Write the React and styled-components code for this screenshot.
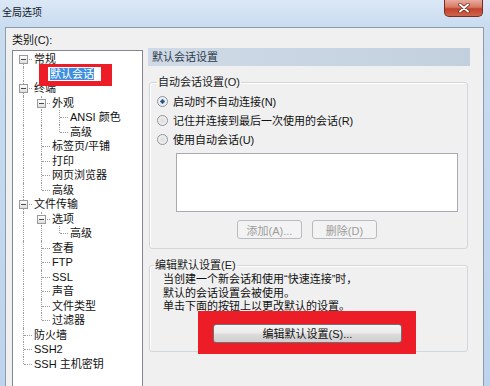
import React from "react";
import styled, { createGlobalStyle } from "styled-components";

const FONT = `"Liberation Sans", "Noto Sans CJK SC", sans-serif`;

const GlobalStyle = createGlobalStyle`
  html, body {
    margin: 0;
    padding: 0;
    overflow: hidden;
    background: #c6daef;
  }
  body {
    font-family: ${FONT};
    font-size: 11px;
    color: #111;
  }
`;

const Window = styled.div`
  width: 490px;
  height: 386px;
  display: flex;
  flex-direction: column;
  overflow: hidden;
  background: linear-gradient(180deg, #dbe8f6 0, #c9dcf0 26px, #bdd4ec 100%);
`;

const TitleBar = styled.div`
  height: 27px;
  flex-shrink: 0;
  display: flex;
  align-items: flex-start;
  padding-left: 2px;
`;

const Title = styled.span`
  font-size: 10px;
  line-height: 12px;
  margin-top: 7px;
  color: #15202c;
`;

const CloseButton = styled.div`
  margin-left: auto;
  margin-right: 7px;
  width: 39px;
  height: 17px;
  box-sizing: border-box;
  border: 1px solid #7a2b22;
  border-top: none;
  border-radius: 0 0 5px 5px;
  background: linear-gradient(180deg, #e9ab9d 0%, #d77863 45%, #c2432c 55%, #d0654c 100%);
  display: grid;
  place-items: center;
`;

const Client = styled.div`
  flex: 1;
  min-height: 0;
  margin: 0 6px 0 5px;
  border: 1px solid #8d9cad;
  border-bottom: none;
  background: #f0f0f0;
  display: grid;
  grid-template-columns: 131px 322px;
  column-gap: 5px;
  align-items: start;
  padding: 5px 0 0 6px;
`;

const LeftCol = styled.div`
  display: flex;
  flex-direction: column;
`;

const CategoryLabel = styled.div`
  height: 14px;
  line-height: 14px;
`;

const Tree = styled.div`
  margin-top: 3px;
  height: 360px;
  background: #fff;
  border: 1px solid #82878f;
  padding: 1px 0 0 1px;
  overflow: hidden;
`;

const Row = styled.div`
  height: 14.5px;
  display: flex;
  align-items: center;
  white-space: nowrap;
`;

const Guide = styled.span`
  position: relative;
  flex-shrink: 0;
  width: 18px;
  height: 100%;
  &::before {
    content: "";
    display: ${(p) => (p.$up || p.$down ? "block" : "none")};
    position: absolute;
    left: 9px;
    top: ${(p) => (p.$up ? "0" : "50%")};
    bottom: ${(p) => (p.$down ? "0" : "50%")};
    border-left: 1px dotted #9c9c9c;
  }
  &::after {
    content: "";
    display: ${(p) => (p.$tick ? "block" : "none")};
    position: absolute;
    left: 10px;
    width: 8px;
    top: 50%;
    border-top: 1px dotted #9c9c9c;
  }
`;

const Expander = styled.span`
  position: absolute;
  z-index: 1;
  left: 5px;
  top: 50%;
  margin-top: -4px;
  width: 9px;
  height: 9px;
  box-sizing: border-box;
  border: 1px solid #9a9a9a;
  background: linear-gradient(180deg, #ffffff, #dedede);
  &::before {
    content: "";
    position: absolute;
    left: 1px;
    top: 3px;
    width: 5px;
    height: 1px;
    background: #4a4a4a;
  }
`;

const Label = styled.span`
  margin-left: 2px;
  line-height: 14px;
`;

const Marked = styled.span`
  position: relative;
  display: inline-block;
  margin-left: ${(p) => p.$left || 0}px;
  margin-top: ${(p) => p.$top || 0}px;
`;

const RedMark = styled.span`
  position: absolute;
  inset: ${(p) => p.$inset};
  background: #ec1d27;
`;

const EditBox = styled.span`
  position: relative;
  display: block;
  height: 14px;
  line-height: 14px;
  padding: 0 7px 0 2px;
  background: #fff;
`;

const Selection = styled.span`
  background: #3f8fe0;
  color: #fff;
`;

const RightCol = styled.div`
  padding-top: 15px;
  display: flex;
  flex-direction: column;
`;

const Header = styled.div`
  height: 18px;
  line-height: 18px;
  padding-left: 4px;
  font-size: 11px;
  color: #2e3c4b;
  background: linear-gradient(90deg, #cfdae6, #c2d0de);
`;

const GroupBox = styled.fieldset`
  margin: ${(p) => p.$top}px 2px 0 1px;
  padding: 0 8px ${(p) => p.$bottom}px ${(p) => p.$left}px;
  border: 1px solid #d2d7dc;
  border-radius: 3px;
  box-shadow: inset 1px 1px 0 #fff;
  min-width: 0;
`;

const Legend = styled.legend`
  padding: 0 1px;
  font-size: 11px;
  line-height: 14px;
  color: #1a1a1a;
`;

const RadioList = styled.div`
  margin-top: 2.5px;
  display: flex;
  flex-direction: column;
`;

const RadioRow = styled.label`
  height: 19px;
  display: flex;
  align-items: center;
  gap: 5px;
`;

const RadioDot = styled.span`
  width: 11px;
  height: 11px;
  box-sizing: border-box;
  border-radius: 50%;
  border: 1px solid #8f9499;
  background: ${(p) =>
    p.$checked
      ? "radial-gradient(circle, #23456e 0, #3f6fa3 32%, #e8ecf0 36%, #f6f6f6 100%)"
      : "radial-gradient(circle, #dcdcdc 0, #e9e9e9 45%, #f7f7f7 100%)"};
`;

const ListBox = styled.div`
  margin: 4.5px 0 0 19px;
  width: 282px;
  height: 59px;
  box-sizing: border-box;
  background: #fff;
  border: 1px solid #a8acb2;
`;

const ButtonRow = styled.div`
  margin: 8px 0 0 80px;
  display: flex;
  gap: 10px;
`;

const Button = styled.button`
  position: relative;
  width: ${(p) => p.$width}px;
  height: 19px;
  padding: 0;
  font-family: ${FONT};
  font-size: 11px;
  border-radius: 3px;
  border: 1px solid ${(p) => (p.disabled ? "#b8bcc0" : "#707070")};
  color: ${(p) => (p.disabled ? "#9c9c9c" : "#111")};
  background: ${(p) =>
    p.disabled
      ? "#f3f3f3"
      : "linear-gradient(180deg, #f4f4f4 0%, #ebebeb 48%, #dddddd 52%, #cfcfcf 100%)"};
`;

const Note = styled.div`
  margin-top: 1px;
  padding-left: 9px;
  line-height: 13.5px;
  color: #111;
`;

const tree = [
  { label: "常规", children: [{ label: "默认会话", selected: true }] },
  {
    label: "终端",
    children: [
      { label: "外观", children: [{ label: "ANSI 颜色" }, { label: "高级" }] },
      { label: "标签页/平铺" },
      { label: "打印" },
      { label: "网页浏览器" },
      { label: "高级" },
    ],
  },
  {
    label: "文件传输",
    children: [
      { label: "选项", children: [{ label: "高级" }] },
      { label: "查看" },
      { label: "FTP" },
      { label: "SSL" },
      { label: "声音" },
      { label: "文件类型" },
      { label: "过滤器" },
    ],
  },
  { label: "防火墙" },
  { label: "SSH2" },
  { label: "SSH 主机密钥" },
];

function flatten(nodes, level = 0, more = [], out = []) {
  nodes.forEach((n, i) => {
    const last = i === nodes.length - 1;
    out.push({
      label: n.label,
      selected: n.selected,
      level,
      more,
      first: level === 0 && i === 0,
      last,
      hasKids: !!n.children,
    });
    if (n.children) flatten(n.children, level + 1, [...more, !last], out);
  });
  return out;
}

const rows = flatten(tree);

function CloseGlyph() {
  return (
    <svg width="12" height="10" viewBox="0 0 12 10">
      <path d="M2 1.5 L10 8.5 M10 1.5 L2 8.5" stroke="#6b1e14" strokeWidth="3.4" strokeLinecap="round" />
      <path d="M2 1.5 L10 8.5 M10 1.5 L2 8.5" stroke="#fff" strokeWidth="2" strokeLinecap="round" />
    </svg>
  );
}

export default function App() {
  return (
    <>
      <GlobalStyle />
      <Window>
        <TitleBar>
          <Title>全局选项</Title>
          <CloseButton>
            <CloseGlyph />
          </CloseButton>
        </TitleBar>
        <Client>
          <LeftCol>
            <CategoryLabel>类别(C):</CategoryLabel>
            <Tree>
              {rows.map((r, idx) => (
                <Row key={idx}>
                  {r.more.map((m, i) => (
                    <Guide key={i} $up={m} $down={m} />
                  ))}
                  <Guide $up={!r.first} $down={!r.last} $tick>
                    {r.hasKids && <Expander />}
                  </Guide>
                  {r.selected ? (
                    <Marked $left={-2}>
                      <RedMark $inset="-3px -11px -5px -9px" />
                      <EditBox>
                        <Selection>{r.label}</Selection>
                      </EditBox>
                    </Marked>
                  ) : (
                    <Label>{r.label}</Label>
                  )}
                </Row>
              ))}
            </Tree>
          </LeftCol>
          <RightCol>
            <Header>默认会话设置</Header>
            <GroupBox $top={9} $bottom={9} $left={7}>
              <Legend>自动会话设置(O)</Legend>
              <RadioList>
                <RadioRow>
                  <RadioDot $checked />
                  启动时不自动连接(N)
                </RadioRow>
                <RadioRow>
                  <RadioDot />
                  记住并连接到最后一次使用的会话(R)
                </RadioRow>
                <RadioRow>
                  <RadioDot />
                  使用自动会话(U)
                </RadioRow>
              </RadioList>
              <ListBox />
              <ButtonRow>
                <Button disabled $width={65}>添加(A)...</Button>
                <Button disabled $width={65}>删除(D)</Button>
              </ButtonRow>
            </GroupBox>
            <GroupBox $top={9} $bottom={8} $left={4}>
              <Legend>编辑默认设置(E)</Legend>
              <Note>
                当创建一个新会话和使用“快速连接”时，
                <br />
                默认的会话设置会被使用。
                <br />
                单击下面的按钮上以更改默认的设置。
              </Note>
              <Marked $left={59} $top={10}>
                <RedMark $inset="-13px -14px -11px -15px" />
                <Button $width={189}>编辑默认设置(S)...</Button>
              </Marked>
            </GroupBox>
          </RightCol>
        </Client>
      </Window>
    </>
  );
}
